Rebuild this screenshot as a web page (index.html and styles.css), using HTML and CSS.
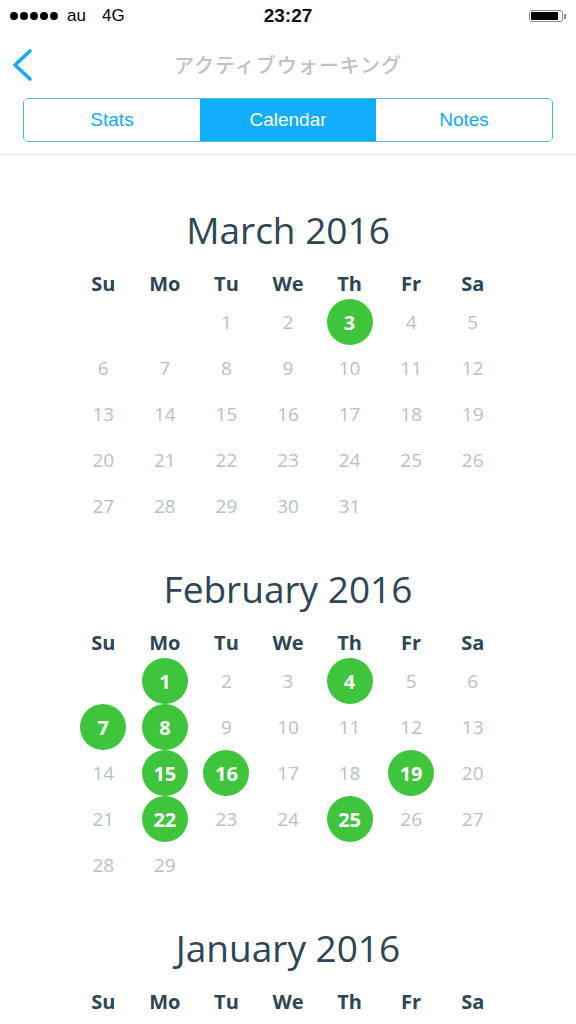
FILE: index.html
```html
<!DOCTYPE html>
<html lang="ja">
<head>
  <meta charset="UTF-8">
  <meta name="viewport" content="width=device-width, initial-scale=1.0">
  <title>アクティブウォーキング</title>
  <link rel="stylesheet" href="styles.css">
</head>
<body>
  <div class="status-bar">
    <div class="status-left">
      <span class="signal"><i></i><i></i><i></i><i></i><i></i></span>
      <span class="carrier">au</span>
      <span class="network">4G</span>
    </div>
    <div class="status-time">23:27</div>
    <div class="status-right">
      <span class="battery"><span class="battery-level"></span></span><span class="battery-tip"></span>
    </div>
  </div>

  <header class="nav">
    <div class="nav-row">
      <a class="back" href="#">
        <svg width="24" height="34" viewBox="0 0 24 34">
          <polyline points="19,3 4,17 19,31" fill="none" stroke="#14a9fb" stroke-width="3.6" stroke-linecap="round" stroke-linejoin="round"/>
        </svg>
      </a>
      <h1 class="nav-title">アクティブウォーキング</h1>
    </div>
    <div class="segments">
      <button class="segment">Stats</button>
      <button class="segment active">Calendar</button>
      <button class="segment">Notes</button>
    </div>
  </header>

  <main id="calendar" class="calendar"></main>

  <script>
    const months = [
      { name: "March 2016", start: 2, days: 31, done: [3] },
      { name: "February 2016", start: 1, days: 29, done: [1, 4, 7, 8, 15, 16, 19, 22, 25] },
      { name: "January 2016", start: 5, days: 31, done: [4, 11, 18] }
    ];
    const weekdays = ["Su", "Mo", "Tu", "We", "Th", "Fr", "Sa"];

    function renderMonth(month) {
      let html = '<section class="month">';
      html += '<h2 class="month-title">' + month.name + '</h2>';
      html += '<div class="weekdays">';
      for (let i = 0; i < weekdays.length; i++) {
        html += '<div class="weekday">' + weekdays[i] + '</div>';
      }
      html += '</div><div class="days">';
      for (let i = 0; i < month.start; i++) {
        html += '<div class="day"></div>';
      }
      for (let d = 1; d <= month.days; d++) {
        if (month.done.indexOf(d) >= 0) {
          html += '<div class="day"><span class="dot">' + d + '</span></div>';
        } else {
          html += '<div class="day">' + d + '</div>';
        }
      }
      html += '</div></section>';
      return html;
    }

    let out = "";
    for (let i = 0; i < months.length; i++) {
      out += renderMonth(months[i]);
    }
    document.getElementById("calendar").innerHTML = out;
  </script>
</body>
</html>
```

FILE: styles.css
```css
body {
  margin: 0;
  background: #fff;
  font-family: "Open Sans", "Liberation Sans", sans-serif;
}

.status-bar {
  height: 32px;
  display: flex;
  align-items: center;
  justify-content: space-between;
  padding: 0 10px;
  font-family: "Liberation Sans", Arial, sans-serif;
  color: #000;
}
.status-left {
  display: flex;
  align-items: center;
  width: 150px;
  font-size: 17px;
}
.signal {
  display: flex;
  gap: 2px;
  margin-right: 9px;
}
.signal i {
  width: 8px;
  height: 8px;
  border-radius: 50%;
  background: #000;
}
.network {
  margin-left: 16px;
}
.status-time {
  font-size: 19px;
  font-weight: bold;
  color: #111;
}
.status-right {
  width: 150px;
  display: flex;
  justify-content: flex-end;
  align-items: center;
}
.battery {
  width: 34px;
  height: 12px;
  border: 1px solid #888;
  border-radius: 3px;
  padding: 1px;
  box-sizing: border-box;
  display: flex;
}
.battery-level {
  flex: 1;
  background: #000;
  margin-right: 3px;
  border-radius: 1px;
}
.battery-tip {
  width: 2px;
  height: 5px;
  background: #888;
  margin-left: 1px;
}

.nav {
  border-bottom: 1px solid #e6e8ea;
  padding-bottom: 12px;
}
.nav-row {
  height: 66px;
  display: flex;
  align-items: center;
  justify-content: center;
  position: relative;
}
.back {
  position: absolute;
  left: 11px;
  top: 16px;
}
.nav-title {
  margin: 0 0 2px;
  font-family: "Noto Sans CJK JP", sans-serif;
  font-size: 20px;
  font-weight: 500;
  color: #b7c4cc;
  letter-spacing: 1px;
}
.segments {
  display: flex;
  margin: 0 23px;
  height: 44px;
  border: 1px solid #4fb8f5;
  border-radius: 5px;
  overflow: hidden;
  box-sizing: border-box;
}
.segment {
  flex: 1;
  border: none;
  background: #fff;
  color: #14a9fb;
  font-family: "Liberation Sans", Arial, sans-serif;
  font-size: 19px;
  padding: 0;
}
.segment.active {
  background: #12adfd;
  color: #fff;
}

.calendar {
  padding-top: 52px;
}
.month {
  margin-bottom: 37px;
}
.month-title {
  margin: 0;
  text-align: center;
  font-size: 37px;
  font-weight: normal;
  line-height: 46px;
  color: #2c4656;
}
.weekdays,
.days {
  width: 431px;
  margin: 0 auto;
  display: grid;
  grid-template-columns: repeat(7, 1fr);
}
.weekdays {
  margin-top: 16px;
}
.days {
  grid-auto-rows: 46px;
}
.weekday {
  height: 30px;
  line-height: 30px;
  text-align: center;
  font-size: 20px;
  font-weight: bold;
  color: #2c4656;
}
.day {
  display: flex;
  align-items: center;
  justify-content: center;
  font-size: 19px;
  color: #b5c1c9;
}
.dot {
  width: 46px;
  height: 46px;
  border-radius: 50%;
  background: #3ec53b;
  color: #fff;
  font-weight: bold;
  font-size: 20px;
  display: flex;
  align-items: center;
  justify-content: center;
}
```
